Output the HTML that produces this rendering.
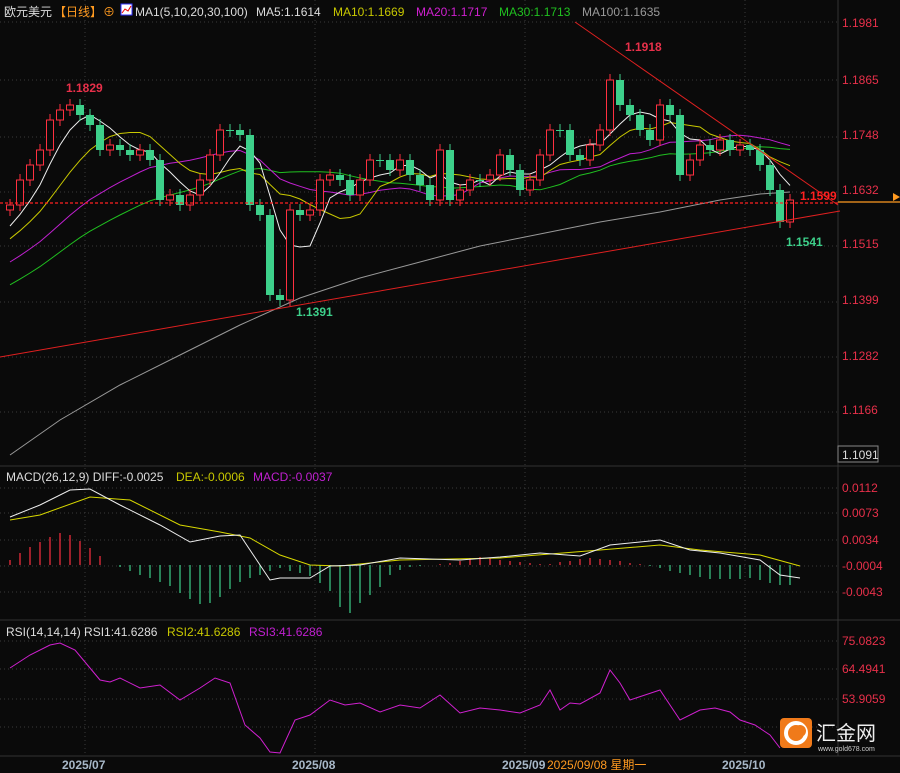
<!DOCTYPE html>
<html><head><meta charset="utf-8"><style>
html,body{margin:0;padding:0;background:#0a0a0a;width:900px;height:773px;overflow:hidden}
svg{display:block}
text{font-family:"Liberation Sans","Noto Sans CJK SC",sans-serif}
</style></head><body>
<svg id="s" width="900" height="773" xmlns="http://www.w3.org/2000/svg">
<rect width="900" height="773" fill="#0a0a0a"/>
<g id="grid" stroke="#3a3a3a" stroke-dasharray="1,3" stroke-width="1"></g>
<line x1="838" y1="0" x2="838" y2="756" stroke="#333"/>
<line x1="0" y1="466" x2="900" y2="466" stroke="#333"/>
<line x1="0" y1="620" x2="900" y2="620" stroke="#333"/>
<line x1="0" y1="756" x2="900" y2="756" stroke="#333"/>
<g id="ma"></g>
<g id="c"></g>
<line x1="0" y1="357" x2="840" y2="211" stroke="#e02020" stroke-width="1"/>
<line x1="575" y1="22" x2="838" y2="205" stroke="#e02020" stroke-width="1"/>
<line x1="0" y1="203" x2="838" y2="203" stroke="#ff2020" stroke-width="1.2" stroke-dasharray="3,2"/>
<line x1="838" y1="202" x2="900" y2="202" stroke="#ff9a20" stroke-width="1.2"/>
<g id="m"></g>
<g font-size="12" fill="#e8304a">
<text x="842" y="27">1.1981</text><text x="842" y="84">1.1865</text><text x="842" y="139">1.1748</text>
<text x="842" y="194">1.1632</text><text x="842" y="248">1.1515</text><text x="842" y="304">1.1399</text>
<text x="842" y="360">1.1282</text><text x="842" y="414">1.1166</text>
<text x="842" y="492">0.0112</text><text x="842" y="517">0.0073</text><text x="842" y="544">0.0034</text>
<text x="842" y="570">-0.0004</text><text x="842" y="596">-0.0043</text>
<text x="842" y="645">75.0823</text><text x="842" y="673">64.4941</text><text x="842" y="703">53.9059</text>
</g>
<rect x="838" y="446" width="40" height="16" fill="#0a0a0a" stroke="#888"/>
<text x="842" y="459" font-size="12" fill="#ddd">1.1091</text>
<g font-size="12" font-weight="bold">
<text x="66" y="92" fill="#e8304a">1.1829</text>
<text x="625" y="51" fill="#e8304a">1.1918</text>
<text x="296" y="316" fill="#3dd08a">1.1391</text>
<text x="786" y="246" fill="#3dd08a">1.1541</text>
<text x="800" y="200" fill="#ff2020">1.1599</text>
</g>
<path d="M893 193 l7 4 l-7 4z" fill="#ff9a20"/>
<g font-size="12">
<text x="4" y="16" fill="#ddd">欧元美元</text><text x="54" y="16" fill="#ff9a20">【日线】</text>
<text x="103" y="16" fill="#ff9a20">⊕</text>
<rect x="121" y="4" width="11" height="11" fill="#fff" stroke="#33f"/><path d="M122 13 l3-4 l3 2 l3-5" stroke="#e00" fill="none"/>
<text x="135" y="16" fill="#ddd">MA1(5,10,20,30,100)</text>
<text x="256" y="16" fill="#ddd">MA5:1.1614</text>
<text x="333" y="16" fill="#c8c800">MA10:1.1669</text>
<text x="416" y="16" fill="#d020d0">MA20:1.1717</text>
<text x="499" y="16" fill="#20c020">MA30:1.1713</text>
<text x="582" y="16" fill="#999">MA100:1.1635</text>
<text x="6" y="481" fill="#ddd">MACD(26,12,9) DIFF:-0.0025</text>
<text x="176" y="481" fill="#c8c800">DEA:-0.0006</text>
<text x="253" y="481" fill="#c020d0">MACD:-0.0037</text>
<text x="6" y="636" fill="#ddd">RSI(14,14,14) RSI1:41.6286</text>
<text x="167" y="636" fill="#c8c800">RSI2:41.6286</text>
<text x="249" y="636" fill="#c020d0">RSI3:41.6286</text>
</g>
<g font-size="12" font-weight="bold" fill="#a8b8c8">
<text x="62" y="769">2025/07</text><text x="292" y="769">2025/08</text><text x="502" y="769">2025/09</text><text x="722" y="769">2025/10</text>
</g>
<rect x="546" y="757" width="118" height="16" fill="#0a0a0a"/>
<text x="547" y="769" font-size="12" fill="#ff9a20">2025/09/08 星期一</text>
<polyline fill="none" stroke="#d020d0" stroke-width="1" points="10,668 30,655 50,645 60,643 75,650 90,668 100,680 110,682 120,678 140,688 160,685 180,700 200,688 215,678 230,683 245,725 260,738 270,752 280,753 295,720 310,715 330,700 345,705 360,703 380,712 400,705 420,708 440,695 460,713 480,708 500,710 520,713 540,705 550,690 560,710 570,703 580,704 600,693 610,670 620,683 630,700 645,695 660,690 680,720 700,710 715,708 730,712 740,720 755,725 770,735 780,748"/>
<rect x="780" y="718" width="32" height="30" rx="4" fill="#f07a1a"/>
<circle cx="796" cy="733" r="10" fill="none" stroke="#fff" stroke-width="4"/>
<circle cx="800" cy="731" r="6" fill="#f07a1a"/>
<text x="816" y="740" font-size="20" fill="#eee">汇金网</text>
<text x="818" y="751" font-size="7" fill="#ccc">www.gold678.com</text>
</svg>
<script>
(function(){
var N="http://www.w3.org/2000/svg";
function el(p,t,a){var e=document.createElementNS(N,t);for(var k in a)e.setAttribute(k,a[k]);p.appendChild(e);return e}
var g=document.getElementById('grid');
[22,80,137,192,246,302,357,412,488,513,540,566,592,641,669,699,727].forEach(function(y){el(g,'line',{x1:0,y1:y,x2:838,y2:y})});
[85,315,525,745].forEach(function(x){el(g,'line',{x1:x,y1:0,x2:x,y2:756})});
var cl=[205,180,165,150,120,110,105,115,125,150,145,150,155,150,160,200,195,205,195,180,155,130,130,135,205,215,295,300,210,215,210,180,175,180,195,180,160,160,170,160,175,185,200,150,200,190,180,180,175,155,170,190,180,155,130,130,155,160,145,130,80,105,115,130,140,105,115,175,160,145,150,140,150,145,150,165,190,222,200];
var hist=[];for(var i=0;i<40;i++)hist.push(400-i*4.5);
var all=hist.concat(cl),c=document.getElementById('c');
for(var i=0;i<cl.length;i++){var x=10+i*10,o=i?cl[i-1]:210,cc=cl[i],ty=Math.min(o,cc),by=Math.max(o,cc);if(by-ty<1)by=ty+1;
var up=cc<o,col=up?'#ff3040':'#3dd08a';
el(c,'line',{x1:x,y1:ty-6,x2:x,y2:by+6,stroke:col});
if(up)el(c,'rect',{x:x-3.5,y:ty,width:7,height:by-ty,fill:'#0a0a0a',stroke:col});
else el(c,'rect',{x:x-4,y:ty,width:8,height:by-ty,fill:col});}
var ma=document.getElementById('ma');
function mline(n,col){var p=[];for(var i=0;i<cl.length;i++){var j=i+40,s2=0;for(var k=0;k<n;k++)s2+=all[j-k];p.push((10+i*10)+','+(s2/n).toFixed(1))}el(ma,'polyline',{points:p.join(' '),fill:'none',stroke:col,'stroke-width':1})}
mline(30,'#20c020');mline(20,'#c020d0');mline(10,'#c8c800');mline(5,'#eee');
el(ma,'polyline',{points:'10,455 60,420 120,385 180,355 240,325 300,298 360,278 420,262 480,246 540,234 600,222 660,212 720,200 760,194 790,192',fill:'none',stroke:'#999'});
var m=document.getElementById('m');
var hv=[5,12,18,23,28,32,30,24,17,9,0,-2,-6,-10,-13,-17,-21,-28,-34,-39,-38,-32,-24,-17,-13,-10,-6,-3,-6,-8,-11,-18,-26,-42,-48,-38,-30,-22,-10,-5,-2,-1,0,1,2,4,7,8,7,5,4,3,2,1,1,3,4,6,7,6,5,4,2,1,-1,-3,-6,-8,-10,-12,-14,-14,-14,-14,-13,-15,-18,-20,-20];
for(var i=0;i<hv.length;i++){var x=10+i*10,v=hv[i];if(!v)continue;el(m,'line',{x1:x,y1:565,x2:x,y2:565-v,stroke:v>0?'#ff3040':'#3dd08a','stroke-width':1.2})}
el(m,'polyline',{points:'10,520 40,515 90,497 130,500 180,525 220,532 250,538 280,555 310,565 340,566 400,560 500,558 600,550 660,545 700,550 760,555 800,566',fill:'none',stroke:'#d8d800'});
el(m,'polyline',{points:'10,517 40,505 70,490 90,489 120,505 160,525 190,542 220,536 240,535 270,580 280,578 310,578 330,566 360,565 400,558 460,560 500,557 540,553 580,556 610,545 660,540 690,550 720,553 760,560 780,575 800,578',fill:'none',stroke:'#eee'});
})();
</script>
</body></html>
